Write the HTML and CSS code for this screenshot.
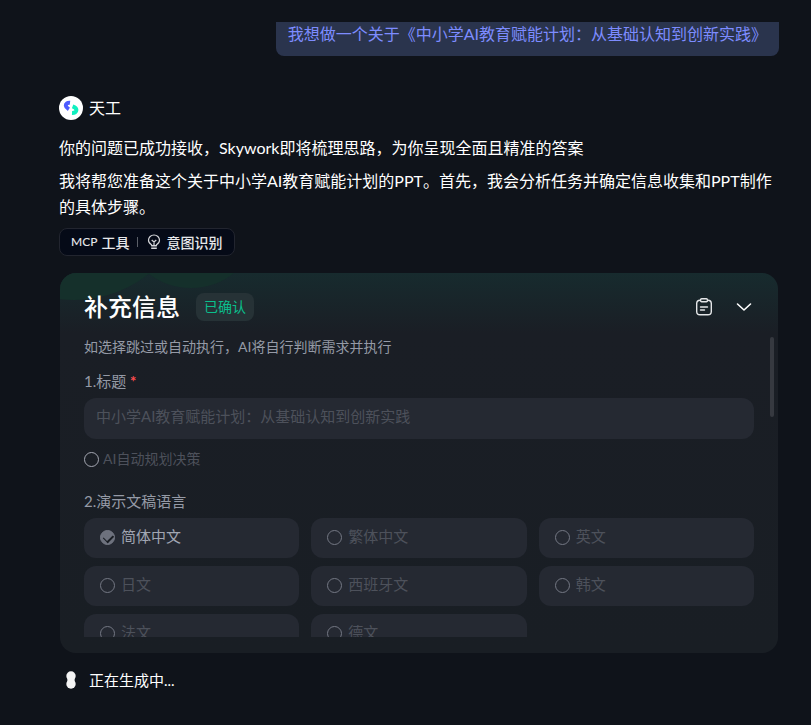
FILE: index.html
```html
<!DOCTYPE html>
<html lang="zh-CN">
<head>
    <meta charset="UTF-8">
    <meta name="viewport" content="width=device-width, initial-scale=1.0">
    <title>天工</title>
    <link rel="stylesheet" href="styles.css">
</head>
<body>
<main class="chat">
    <div class="bubble">我想做一个关于《中小学AI教育赋能计划：从基础认知到创新实践》</div>

    <div class="author">
        <svg class="avatar" viewBox="0 0 24 24" aria-hidden="true">
            <circle cx="12" cy="12" r="12" fill="#fff"/>
            <path d="M11 6.800C8.500 6.500 6.700 7.800 6.800 9.700C6.900 11.500 8.500 12.300 9.900 13.200" fill="none" stroke="#4d5bff" stroke-width="4"/>
            <path d="M13.600 10.300C15.500 11 17.400 12 17.400 13.900C17.400 16 15.600 17.100 13 17" fill="none" stroke="#10f0c0" stroke-width="4"/>
        </svg>
        <span>天工</span>
    </div>

    <p class="text">你的问题已成功接收，Skywork即将梳理思路，为你呈现全面且精准的答案</p>
    <p class="text">我将帮您准备这个关于中小学AI教育赋能计划的PPT。首先，我会分析任务并确定信息收集和PPT制作的具体步骤。</p>

    <div class="tool">
        <span class="mcp">MCP</span>
        <span>工具</span>
        <span class="line"></span>
        <svg class="bulb" viewBox="0 0 14 16" aria-hidden="true">
            <path d="M4.5 11.5V10.7C2.6 9.7 1.5 8.2 1.5 6.3a5.5 5.3 0 0 1 11 0c0 1.9-1.1 3.4-3 4.4v.8z M4.7 6l2.3 2 2.3-2M7 8v3.3"/>
            <path d="M4.2 13h5.6M4.2 14.5h5.6"/>
        </svg>
        <span>意图识别</span>
    </div>

    <section class="card">
        <svg class="rings" viewBox="0 0 180 30" aria-hidden="true">
            <ellipse cx="14" cy="-80" rx="114" ry="107"/>
            <ellipse cx="131" cy="-38" rx="62" ry="53"/>
        </svg>
        <header class="card-head">
            <h2>补充信息</h2>
            <span class="badge">已确认</span>
            <div class="actions">
                <button type="button" aria-label="复制">
                    <svg viewBox="0 0 20 20">
                        <rect x="2.7" y="3.2" width="14.6" height="14.6" rx="3.4"/>
                        <rect x="6.6" y="1.8" width="6.8" height="3" rx="1" class="clip"/>
                        <path d="M6.5 10h7M6.5 13h4"/>
                    </svg>
                </button>
                <button type="button" aria-label="收起">
                    <svg viewBox="0 0 20 20"><path d="M3.5 7l6.5 6 6.5-6" class="arrow"/></svg>
                </button>
            </div>
        </header>

        <form class="form">
            <p class="tip">如选择跳过或自动执行，AI将自行判断需求并执行</p>
            <label class="label" for="title">1.标题 <span class="must">*</span></label>
            <input class="field" id="title" type="text" value="中小学AI教育赋能计划：从基础认知到创新实践" disabled>
            <label class="auto"><input type="radio" name="auto" disabled>AI自动规划决策</label>

            <fieldset class="group">
                <legend class="label">2.演示文稿语言</legend>
                <div class="langs">
                    <label class="lang on"><input type="radio" name="lang" checked disabled>简体中文</label>
                    <label class="lang"><input type="radio" name="lang" disabled>繁体中文</label>
                    <label class="lang"><input type="radio" name="lang" disabled>英文</label>
                    <label class="lang"><input type="radio" name="lang" disabled>日文</label>
                    <label class="lang"><input type="radio" name="lang" disabled>西班牙文</label>
                    <label class="lang"><input type="radio" name="lang" disabled>韩文</label>
                    <label class="lang"><input type="radio" name="lang" disabled>法文</label>
                    <label class="lang"><input type="radio" name="lang" disabled>德文</label>
                </div>
            </fieldset>
        </form>
        <div class="thumb"></div>
    </section>

    <div class="loading">
        <svg viewBox="0 0 24 24" aria-hidden="true" fill="#f4f4f4">
            <circle cx="12" cy="8" r="4.7"/>
            <circle cx="12" cy="16" r="4.7"/>
            <rect x="8.4" y="9" width="7.2" height="6"/>
        </svg>
        <span>正在生成中...</span>
    </div>
</main>
</body>
</html>
```

FILE: styles.css
```css
*{
    box-sizing: border-box;
}
body{
    margin: 0;
    background-color: #0f131a;
    color: #fff;
    font-family: Lato, "Noto Sans CJK SC", sans-serif;
    font-size: 16px;
}
p, h2{
    margin: 0;
}

.chat{
    display: flex;
    flex-direction: column;
    align-items: flex-start;
    padding: 22px 32px 22px 59px;
}
.bubble{
    align-self: flex-end;
    padding: 0 12px 10px;
    border-radius: 0 0 8px 8px;
    background-color: #2a344d;
    color: #7d8cff;
    line-height: 24px;
}
.author{
    display: flex;
    align-items: center;
    gap: 6px;
    margin: 40px 0 15px;
    line-height: 24px;
}
.avatar{
    width: 24px;
    height: 24px;
}
.text{
    margin-bottom: 7px;
    line-height: 26px;
}

.tool{
    display: flex;
    align-items: center;
    height: 28px;
    margin-top: 1px;
    padding: 0 12px 1px 11px;
    border: 1px solid #22252f;
    border-radius: 8px;
    background-color: #050a17;
    color: #e6e7ea;
    font-size: 14px;
    font-weight: 500;
}
.mcp{
    margin-right: 4px;
    font-size: 12px;
}
.line{
    width: 1px;
    height: 10px;
    margin: 0 9px 0 8px;
    background-color: #5b5f68;
}
.bulb{
    width: 14px;
    height: 16px;
    margin-right: 5px;
    fill: none;
    stroke: #d5d6da;
    stroke-width: 1.2;
}

/* card */
.card{
    position: relative;
    align-self: stretch;
    margin: 17px 1px 15px;
    padding: 20px 24px 16px;
    border-radius: 16px;
    background: linear-gradient(#172b2e, #1a1e25 60px, #191e24);
    overflow: hidden;
}
.rings{
    position: absolute;
    top: 0;
    left: 0;
    width: 180px;
    height: 30px;
    fill: #15302b;
}
.card-head{
    position: relative;
    display: flex;
    align-items: center;
    gap: 16px;
    height: 28px;
    margin-bottom: 16px;
}
.card-head h2{
    font-size: 24px;
    font-weight: 500;
    line-height: 28px;
}
.badge{
    padding: 0 8px;
    border-radius: 8px;
    background-color: #263236;
    color: #0abf8c;
    font-size: 14px;
    line-height: 28px;
}
.actions{
    display: flex;
    gap: 20px;
    margin-left: auto;
}
.actions button{
    width: 20px;
    height: 20px;
    padding: 0;
    border: 0;
    background: none;
    cursor: pointer;
}
.actions svg{
    display: block;
    fill: none;
    stroke: #e4e6e8;
    stroke-width: 1.4;
    stroke-linecap: round;
}
.actions .clip{
    fill: #1a262a;
}
.actions .arrow{
    stroke: #fff;
    stroke-width: 1.6;
    stroke-linejoin: round;
}

/* form */
.form{
    height: 300px;
    overflow: hidden;
}
.tip{
    margin-bottom: 14px;
    color: #959aa6;
    font-size: 14px;
    line-height: 20px;
}
.label{
    display: block;
    padding: 0;
    margin-bottom: 7px;
    color: #959aa6;
    font-size: 15px;
    line-height: 20px;
}
.must{
    color: #ff4d4f;
    font-weight: bold;
}
.field{
    display: block;
    width: 100%;
    height: 41px;
    padding: 0 12px 6px;
    border: 0;
    border-radius: 12px;
    background-color: #252932;
    color: #4d515b;
    font-family: inherit;
    font-size: 15px;
}
.auto{
    display: flex;
    align-items: center;
    gap: 4px;
    margin: 10px 0 22px;
    color: #4d515b;
    font-size: 14px;
    line-height: 20px;
}
.group{
    min-width: 0;
    margin: 0;
    padding: 0;
    border: 0;
}
.langs{
    display: grid;
    grid-template-columns: repeat(3, 1fr);
    gap: 8px 12px;
}
.lang{
    display: flex;
    align-items: center;
    gap: 6px;
    height: 40px;
    padding: 0 16px 5px;
    border-radius: 12px;
    background-color: #252932;
    color: #4d515b;
    font-size: 15px;
}
.lang.on{
    color: #a1a6b2;
}
input[type=radio]{
    position: relative;
    appearance: none;
    width: 15px;
    height: 15px;
    margin: 0;
    border: 1px solid #747884;
    border-radius: 50%;
}
.auto input[type=radio]{
    border-color: #a4a7b2;
}
.lang input[type=radio]{
    margin-top: 4px;
}
input[type=radio]:checked{
    background-color: #6d717d;
}
input[type=radio]:checked::after{
    content: "";
    position: absolute;
    top: 3px;
    left: 3px;
    width: 8px;
    height: 5px;
    border-left: 1px solid #1a1e24;
    border-bottom: 2px solid #1a1e24;
    transform: rotate(-45deg);
}
.thumb{
    position: absolute;
    top: 64px;
    right: 4px;
    width: 4px;
    height: 80px;
    border-radius: 2px;
    background-color: #363940;
}

.loading{
    display: flex;
    align-items: center;
    gap: 6px;
    font-size: 15px;
    line-height: 24px;
}
.loading svg{
    width: 24px;
    height: 24px;
}
```
